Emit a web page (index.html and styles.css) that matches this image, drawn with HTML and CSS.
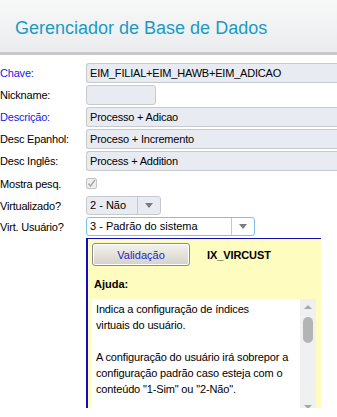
FILE: index.html
```html
<!DOCTYPE html>
<html lang="pt-BR">
<head>
    <meta charset="UTF-8">
    <meta name="viewport" content="width=device-width, initial-scale=1.0">
    <title>Gerenciador de Base de Dados</title>
    <link rel="stylesheet" href="styles.css">
</head>
<body>

<header class="top">
    <h1>Gerenciador de Base de Dados</h1>
</header>

<div class="form">
    <div class="row">
        <span class="lbl key">Chave:</span>
        <div class="field wide">EIM_FILIAL+EIM_HAWB+EIM_ADICAO</div>
    </div>
    <div class="row">
        <span class="lbl">Nickname:</span>
        <div class="field short"></div>
    </div>
    <div class="row">
        <span class="lbl key">Descrição:</span>
        <div class="field wide">Processo + Adicao</div>
    </div>
    <div class="row">
        <span class="lbl">Desc Epanhol:</span>
        <div class="field wide">Proceso + Incremento</div>
    </div>
    <div class="row">
        <span class="lbl">Desc Inglês:</span>
        <div class="field wide">Process + Addition</div>
    </div>
    <div class="row check-row">
        <span class="lbl">Mostra pesq.</span>
        <span class="checkbox">
            <svg width="11" height="11" viewBox="0 0 11 11"><path d="M2.5 5.5 L4.5 8 L9 2" fill="none" stroke="#a9a9a9" stroke-width="1.4"/></svg>
        </span>
    </div>
    <div class="row sel-row">
        <span class="lbl">Virtualizado?</span>
        <div class="select small">
            <span class="val">2 - Não</span>
            <span class="arrow"></span>
        </div>
    </div>
    <div class="row sel-row">
        <span class="lbl">Virt. Usuário?</span>
        <div class="select focus">
            <span class="val">3 - Padrão do sistema</span>
            <span class="arrow"></span>
        </div>
    </div>

    <div class="help">
        <div class="help-head">
            <button class="btn">Validação</button>
            <span class="code">IX_VIRCUST</span>
        </div>
        <div class="help-title">Ajuda:</div>
        <div class="help-box">
            <div class="help-text">
                <p>Indica a configuração de índices<br>virtuais do usuário.</p>
                <p>A configuração do usuário irá sobrepor a<br>configuração padrão caso esteja com o<br>conteúdo "1-Sim" ou "2-Não".</p>
            </div>
            <div class="scrollbar">
                <span class="sb-up"></span>
                <span class="sb-thumb"></span>
                <span class="sb-down"></span>
            </div>
        </div>
    </div>
</div>

</body>
</html>
```

FILE: styles.css
```css
html, body {
    margin: 0;
    padding: 0;
    overflow: hidden;
}
body {
    font-family: "Liberation Sans", Arial, sans-serif;
    font-size: 11px;
    color: #000;
    background-color: #fff;
}
.top {
    height: 52px;
    background: linear-gradient(#f8f8f8, #eaecee);
    border-bottom: 3px solid #c8c8c8;
}
.top h1 {
    margin: 0;
    padding: 19px 0 0 15px;
    font-size: 18px;
    line-height: 18px;
    font-weight: normal;
    color: #1a9bc5;
}
.form {
    padding-top: 8px;
}
.row {
    display: grid;
    grid-template-columns: 86px auto;
    align-items: center;
    margin-bottom: 2px;
}
.lbl {
    letter-spacing: -0.2px;
    white-space: nowrap;
}
.lbl.key {
    color: #1818e8;
}
.field {
    box-sizing: border-box;
    height: 20px;
    line-height: 18px;
    padding: 0 3px;
    border: 1px solid #c6c9ce;
    border-radius: 3px;
    background-color: #e8ecf2;
    letter-spacing: -0.2px;
    white-space: nowrap;
}
.field.wide {
    width: 251px;
    border-right: none;
    border-radius: 3px 0 0 3px;
}
.field.short {
    width: 70px;
}
.check-row {
    height: 21px;
}
.checkbox {
    box-sizing: border-box;
    width: 11px;
    height: 11px;
    border: 1px solid #c4c4c4;
    border-radius: 2px;
    background-color: #eeeeee;
    display: flex;
}
.checkbox svg {
    margin: -1px;
}
.select {
    box-sizing: border-box;
    display: flex;
    height: 19px;
    width: 169px;
    border: 1px solid #c6c9ce;
    border-radius: 3px;
    background-color: #e8ecf2;
}
.select.small {
    width: 75px;
}
.select.focus {
    background-color: #fff;
    border-color: #7cc3e2;
}
.select .val {
    flex: 1;
    line-height: 17px;
    padding-left: 3px;
    white-space: nowrap;
    overflow: hidden;
}
.select .arrow {
    width: 22px;
    border-left: 1px solid #c6c9ce;
    position: relative;
}
.select .arrow::after {
    content: "";
    position: absolute;
    left: 7px;
    top: 6px;
    border-left: 4px solid transparent;
    border-right: 4px solid transparent;
    border-top: 5px solid #7c7c7c;
}
.help {
    box-sizing: border-box;
    margin-left: 86px;
    width: 235px;
    height: 170px;
    background-color: #fffcc0;
    border-top: 1px solid #1010a8;
    border-left: 2px solid #1010b8;
    padding: 4px 5px 6px 3px;
    display: flex;
    flex-direction: column;
}
.help-head {
    display: flex;
    align-items: center;
    padding-left: 1px;
}
.btn {
    width: 98px;
    height: 23px;
    margin: 0;
    padding: 0;
    border: 1px solid #8c8c8c;
    border-radius: 3px;
    background: linear-gradient(#f4f2ee, #d6d2ca);
    box-shadow: inset 0 0 0 1px #ffffff;
    font-family: "Liberation Sans", Arial, sans-serif;
    font-size: 11px;
    color: #2424c4;
}
.code {
    margin-left: 17px;
    font-weight: bold;
    letter-spacing: -0.1px;
}
.help-title {
    margin: 10px 0 0 3px;
    line-height: 16px;
    font-weight: bold;
}
.help-box {
    margin-top: 7px;
    flex: 1;
    display: flex;
    background-color: #fff;
}
.help-text {
    flex: 1;
    padding: 2px 5px;
    line-height: 16px;
    letter-spacing: -0.15px;
}
.help-text p {
    margin: 0 0 16px 0;
}
.scrollbar {
    width: 16px;
    background-color: #f0f0f0;
    position: relative;
}
.sb-up, .sb-down {
    position: absolute;
    left: 4px;
    border-left: 4px solid transparent;
    border-right: 4px solid transparent;
}
.sb-up {
    top: 6px;
    border-bottom: 4px solid #a8a8a8;
}
.sb-down {
    bottom: 6px;
    border-top: 4px solid #a8a8a8;
}
.sb-thumb {
    position: absolute;
    left: 3px;
    top: 18px;
    width: 10px;
    height: 26px;
    border-radius: 5px;
    background-color: #b4b4b4;
}
```
